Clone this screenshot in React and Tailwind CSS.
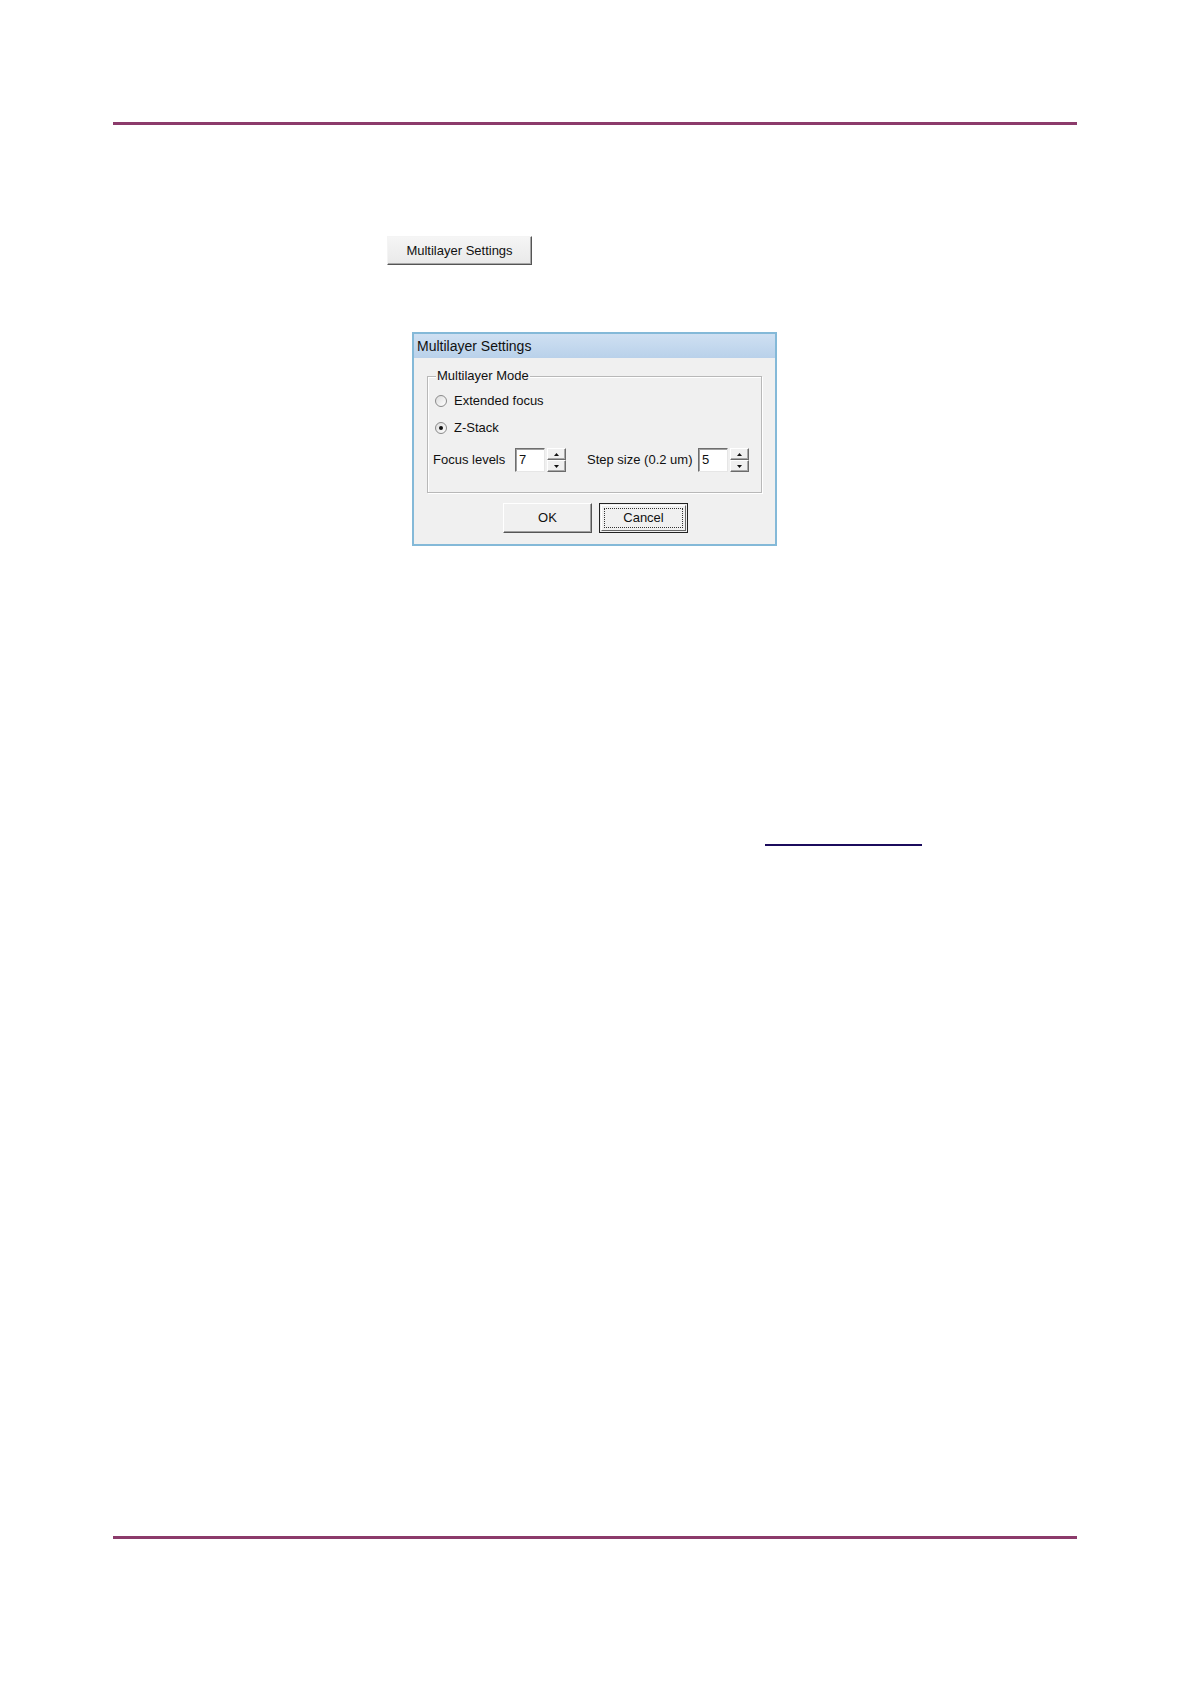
import React from "react";

function Spinner() {
  return (
    <div className="flex flex-col w-[19px] h-[24px] ml-[2px]">
      {[0, 1].map((i) => (
        <div
          key={i}
          className="flex-1 flex items-center justify-center bg-[#f0f0f0] border border-t-white border-l-white border-r-[#6b6b6b] border-b-[#6b6b6b] shadow-[inset_-1px_-1px_0_#a8a8a8]"
        >
          <svg width="5" height="3" viewBox="0 0 5 3">
            {i === 0 ? (
              <polygon points="2.5,0 5,3 0,3" fill="#111" />
            ) : (
              <polygon points="0,0 5,0 2.5,3" fill="#111" />
            )}
          </svg>
        </div>
      ))}
    </div>
  );
}

function NumInput({ value }) {
  return (
    <div className="w-[30px] h-[24px] bg-white border border-t-[#6e6e6e] border-l-[#6e6e6e] border-r-[#e6e6e6] border-b-[#e6e6e6] shadow-[inset_1px_1px_0_#a0a0a0] pl-[3px] leading-[22px] text-[13px] text-[#111]">
      {value}
    </div>
  );
}

function Radio({ checked, label }) {
  return (
    <div className="flex items-center h-[13px]">
      <div className="w-[12px] h-[12px] rounded-full border border-[#8a8a8a] bg-gradient-to-br from-[#dcdcdc] to-white flex items-center justify-center">
        {checked && <div className="w-[4px] h-[4px] rounded-full bg-[#111]" />}
      </div>
      <span className="ml-[7px] text-[13px] text-[#111] leading-none">{label}</span>
    </div>
  );
}

export default function App() {
  return (
    <div className="w-[1190px] h-[1684px] bg-white font-['Liberation_Sans',Arial,sans-serif] overflow-hidden">
      <div className="pt-[122px] px-[113px]">
        <div className="h-[3px] bg-[#8c3b6b]" />

        {/* Multilayer Settings button */}
        <div className="mt-[111px] ml-[274px] w-[145px] h-[29px] flex items-center justify-center bg-gradient-to-b from-[#f5f5f5] to-[#e9e9e9] border border-t-[#f4f4f4] border-l-[#f4f4f4] border-r-[#555] border-b-[#555] shadow-[inset_-1px_-1px_0_#a8a8a8] text-[13px] text-[#111]">
          Multilayer Settings
        </div>

        {/* Dialog */}
        <div className="mt-[67px] ml-[299px] w-[365px] h-[214px] border-2 border-[#84b9d8] bg-[#f0f0f0] flex flex-col">
          <div className="h-[24px] bg-gradient-to-b from-[#cfe0f2] to-[#b9d1ea] flex items-center pl-[3px] text-[14px] text-[#111]">
            Multilayer Settings
          </div>
          <div className="flex-1 px-[13px] pt-[18px]">
            <div className="relative h-[117px] border border-[#b8b8b8] shadow-[inset_1px_1px_0_#fff,1px_1px_0_#fff] pl-[7px] pt-[17px]">
              <div className="absolute left-[8px] top-[-9px] bg-[#f0f0f0] px-[1px] text-[13px] text-[#111] leading-[16px]">
                Multilayer Mode
              </div>
              <Radio label="Extended focus" />
              <div className="mt-[14px]">
                <Radio checked label="Z-Stack" />
              </div>
              <div className="mt-[14px] flex items-center -ml-[2px]">
                <span className="text-[13px] text-[#111] w-[82px]">Focus levels</span>
                <NumInput value="7" />
                <Spinner />
                <span className="ml-[21px] text-[13px] text-[#111] w-[111px]">Step size (0.2 um)</span>
                <NumInput value="5" />
                <Spinner />
              </div>
            </div>
            <div className="mt-[10px] flex justify-center gap-[7px] pl-[2px]">
              <div className="w-[89px] h-[30px] flex items-center justify-center bg-[#f0f0f0] border border-t-white border-l-white border-r-[#555] border-b-[#555] shadow-[inset_-1px_-1px_0_#a0a0a0] text-[13px] text-[#111]">
                OK
              </div>
              <div className="w-[89px] h-[30px] p-[1px] border border-[#222] bg-[#f0f0f0]">
                <div className="w-full h-full border border-t-white border-l-white border-r-[#666] border-b-[#666] p-[2px]">
                  <div className="w-full h-full border border-dotted border-[#333] flex items-center justify-center text-[13px] text-[#111]">
                    Cancel
                  </div>
                </div>
              </div>
            </div>
          </div>
        </div>

        {/* Link underline */}
        <div className="mt-[298px] ml-[652px] w-[157px] h-[2px] bg-[#1b0b5c]" />

        <div className="mt-[690px] h-[3px] bg-[#8c3b6b]" />
      </div>
    </div>
  );
}
